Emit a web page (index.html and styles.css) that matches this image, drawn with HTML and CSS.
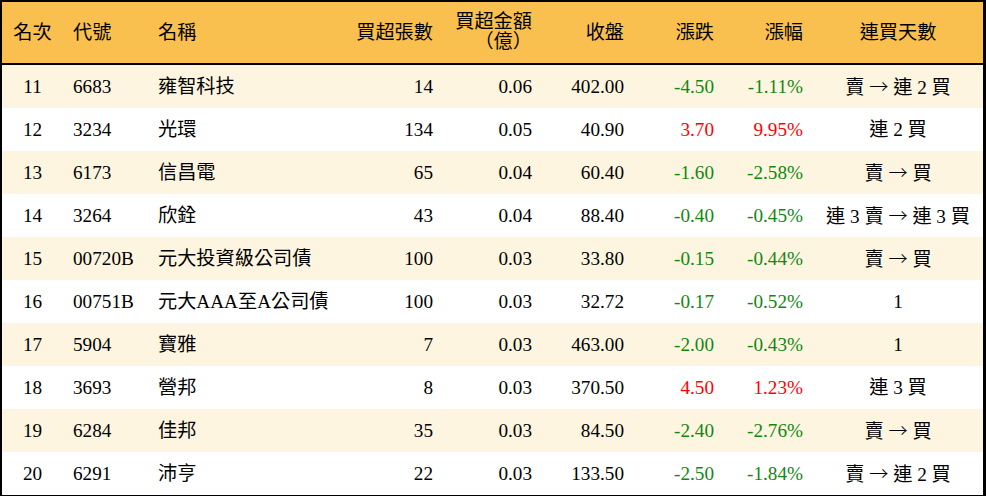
FILE: index.html
```html
<!DOCTYPE html>
<html lang="zh-Hant">
<head>
<meta charset="utf-8">
<title>買超排行</title>
<link rel="stylesheet" href="styles.css">
</head>
<body>
<table class="rank">
  <colgroup>
    <col class="c-rank"><col class="c-code"><col class="c-name"><col class="c-vol"><col class="c-amt"><col class="c-close"><col class="c-chg"><col class="c-pct"><col class="c-days">
  </colgroup>
  <thead>
    <tr>
      <th class="ctr">名次</th>
      <th class="lft">代號</th>
      <th class="lft">名稱</th>
      <th class="rgt">買超張數</th>
      <th class="rgt two">買超金額<br>（億）</th>
      <th class="rgt">收盤</th>
      <th class="rgt">漲跌</th>
      <th class="rgt">漲幅</th>
      <th class="ctr">連買天數</th>
    </tr>
  </thead>
  <tbody>
    <tr><td class="ctr">11</td><td class="lft">6683</td><td class="lft">雍智科技</td><td class="rgt">14</td><td class="rgt">0.06</td><td class="rgt">402.00</td><td class="rgt dn">-4.50</td><td class="rgt dn">-1.11%</td><td class="ctr">賣 <span class="arr">→</span> 連 2 買</td></tr>
    <tr><td class="ctr">12</td><td class="lft">3234</td><td class="lft">光環</td><td class="rgt">134</td><td class="rgt">0.05</td><td class="rgt">40.90</td><td class="rgt up">3.70</td><td class="rgt up">9.95%</td><td class="ctr">連 2 買</td></tr>
    <tr><td class="ctr">13</td><td class="lft">6173</td><td class="lft">信昌電</td><td class="rgt">65</td><td class="rgt">0.04</td><td class="rgt">60.40</td><td class="rgt dn">-1.60</td><td class="rgt dn">-2.58%</td><td class="ctr">賣 <span class="arr">→</span> 買</td></tr>
    <tr><td class="ctr">14</td><td class="lft">3264</td><td class="lft">欣銓</td><td class="rgt">43</td><td class="rgt">0.04</td><td class="rgt">88.40</td><td class="rgt dn">-0.40</td><td class="rgt dn">-0.45%</td><td class="ctr">連 3 賣 <span class="arr">→</span> 連 3 買</td></tr>
    <tr><td class="ctr">15</td><td class="lft">00720B</td><td class="lft">元大投資級公司債</td><td class="rgt">100</td><td class="rgt">0.03</td><td class="rgt">33.80</td><td class="rgt dn">-0.15</td><td class="rgt dn">-0.44%</td><td class="ctr">賣 <span class="arr">→</span> 買</td></tr>
    <tr><td class="ctr">16</td><td class="lft">00751B</td><td class="lft">元大AAA至A公司債</td><td class="rgt">100</td><td class="rgt">0.03</td><td class="rgt">32.72</td><td class="rgt dn">-0.17</td><td class="rgt dn">-0.52%</td><td class="ctr">1</td></tr>
    <tr><td class="ctr">17</td><td class="lft">5904</td><td class="lft">寶雅</td><td class="rgt">7</td><td class="rgt">0.03</td><td class="rgt">463.00</td><td class="rgt dn">-2.00</td><td class="rgt dn">-0.43%</td><td class="ctr">1</td></tr>
    <tr><td class="ctr">18</td><td class="lft">3693</td><td class="lft">營邦</td><td class="rgt">8</td><td class="rgt">0.03</td><td class="rgt">370.50</td><td class="rgt up">4.50</td><td class="rgt up">1.23%</td><td class="ctr">連 3 買</td></tr>
    <tr><td class="ctr">19</td><td class="lft">6284</td><td class="lft">佳邦</td><td class="rgt">35</td><td class="rgt">0.03</td><td class="rgt">84.50</td><td class="rgt dn">-2.40</td><td class="rgt dn">-2.76%</td><td class="ctr">賣 <span class="arr">→</span> 買</td></tr>
    <tr><td class="ctr">20</td><td class="lft">6291</td><td class="lft">沛亨</td><td class="rgt">22</td><td class="rgt">0.03</td><td class="rgt">133.50</td><td class="rgt dn">-2.50</td><td class="rgt dn">-1.84%</td><td class="ctr">賣 <span class="arr">→</span> 連 2 買</td></tr>
  </tbody>
</table>
</body>
</html>
```

FILE: styles.css
```css
html, body {
  margin: 0;
  padding: 0;
  background: #ffffff;
}

.rank {
  width: 986px;
  border-collapse: separate;
  border-spacing: 0;
  table-layout: fixed;
  border-style: solid;
  border-color: #000;
  border-width: 2px 3px 3px 2px;
  font-family: "Liberation Serif", "Noto Sans CJK TC", serif;
  font-size: 19.2px;
  color: #000;
}

.c-rank { width: 61px; }
.c-code { width: 85px; }
.c-name { width: 195px; }
.c-vol { width: 100px; }
.c-amt { width: 99px; }
.c-close { width: 92px; }
.c-chg { width: 90px; }
.c-pct { width: 89px; }
.c-days { width: 170px; }

.rank th {
  background: #f9c04f;
  height: 59px;
  padding: 0 10px;
  font-weight: normal;
  line-height: 20px;
  vertical-align: middle;
  border-bottom: 2px solid #000;
  white-space: nowrap;
}

.rank th.two {
  padding-bottom: 2px;
}

.rank td {
  height: 43px;
  padding: 0 10px;
  line-height: 22px;
  vertical-align: middle;
  white-space: nowrap;
}

.rank tbody tr:nth-child(odd) td {
  background: #fef5e0;
}

.ctr { text-align: center; }
.lft { text-align: left; }
.rgt { text-align: right; }

.rank td.dn { color: #118811; }
.rank td.up { color: #ff0000; }

.arr {
  font-family: "Noto Sans CJK TC", sans-serif;
  font-weight: 300;
}
```
